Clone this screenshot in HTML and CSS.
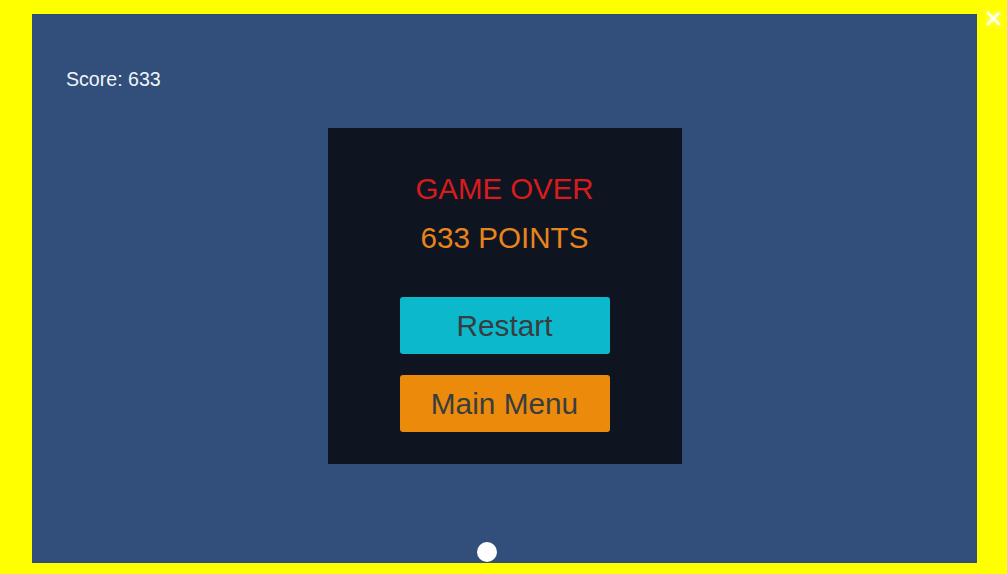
FILE: index.html
```html
<!DOCTYPE html>
<html lang="en">
<head>
<meta charset="utf-8">
<title>Game Over</title>
<link rel="stylesheet" href="styles.css">
</head>
<body>
  <button class="close" aria-label="Close">
    <svg width="15" height="15" viewBox="0 0 15 15"><path d="M2 2 L13 13 M13 2 L2 13" stroke="#fff" stroke-width="2.2" stroke-linecap="square" fill="none"/></svg>
  </button>
  <main class="stage">
    <div class="score">Score: 633</div>
    <section class="panel">
      <h1 class="title">GAME OVER</h1>
      <p class="points">633 POINTS</p>
      <div class="actions">
        <button class="btn btn-restart">Restart</button>
        <button class="btn btn-menu">Main Menu</button>
      </div>
    </section>
    <div class="ball"></div>
  </main>
</body>
</html>
```
FILE: styles.css
```css
html, body {
  margin: 0;
  height: 100%;
}
body {
  background: #ffff00;
  box-sizing: border-box;
  padding: 14px 30px 11px 32px;
  display: flex;
  font-family: "Liberation Sans", Arial, sans-serif;
  overflow: hidden;
}
.stage {
  position: relative;
  flex: 1;
  background: #314f7a;
  display: flex;
  flex-direction: column;
  padding: 54px 0 0 34px;
}
.score {
  color: #f2f4f8;
  font-size: 19.6px;
  line-height: 22px;
  align-self: flex-start;
}
.panel {
  align-self: center;
  margin: 38px 0 0 -34px;
  width: 354px;
  box-sizing: border-box;
  padding: 46px 0 32px;
  background: #0f1520;
  display: flex;
  flex-direction: column;
  align-items: center;
}
.title {
  margin: 0;
  font-weight: normal;
  font-size: 29.4px;
  line-height: 30px;
  color: #d81b1d;
}
.points {
  margin: 19px 0 0;
  font-size: 29.6px;
  line-height: 30px;
  color: #e8841b;
}
.actions {
  margin-top: 44px;
  display: flex;
  flex-direction: column;
  gap: 21px;
}
.btn {
  width: 210px;
  height: 57px;
  border: none;
  border-radius: 3px;
  font-family: inherit;
  font-size: 29.8px;
  color: #393d40;
  display: flex;
  align-items: center;
  justify-content: center;
  padding: 1px 0 0;
}
.btn-restart { background: #0bb8cc; }
.btn-menu { background: #eb8a0b; }
.ball {
  position: absolute;
  left: 445px;
  bottom: 1px;
  width: 20px;
  height: 20px;
  border-radius: 50%;
  background: #fff;
}
.close {
  position: absolute;
  left: 986px;
  top: 11px;
  width: 15px;
  height: 15px;
  padding: 0;
  border: none;
  background: transparent;
  filter: drop-shadow(0 0 2px rgba(255,255,255,0.9));
}
.close svg { display: block; }
```
